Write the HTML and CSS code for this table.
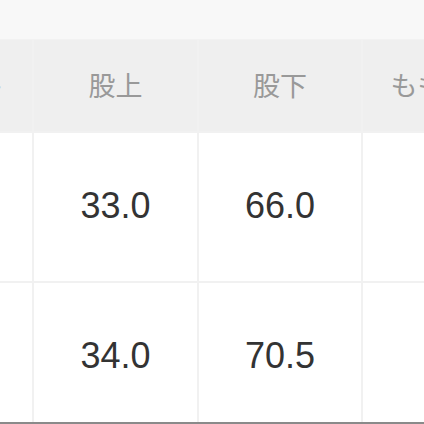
FILE: index.html
```html
<!DOCTYPE html>
<html lang="ja">
<head>
<meta charset="utf-8">
<link rel="stylesheet" href="styles.css">
</head>
<body>
<div class="frame">
  <div class="top"></div>
  <div class="table">
    <div class="cell head">ウエスト</div>
    <div class="cell head">股上</div>
    <div class="cell head">股下</div>
    <div class="cell head">もも周り</div>
    <div class="cell val"></div>
    <div class="cell val">33.0</div>
    <div class="cell val">66.0</div>
    <div class="cell val"></div>
    <div class="cell val"></div>
    <div class="cell val">34.0</div>
    <div class="cell val">70.5</div>
    <div class="cell val"></div>
  </div>
</div>
<div class="edge"></div>
</body>
</html>
```
FILE: styles.css
```css
html, body {
  margin: 0;
  padding: 0;
  background: #ffffff;
}
body {
  width: 424px;
  height: 424px;
  overflow: hidden;
}
.frame {
  height: 422px;
  overflow: hidden;
}
.top {
  height: 39px;
  background: #f8f8f8;
  border-bottom: 1px solid #f2f2f2;
}
.table {
  margin-left: -131px;
  width: 700px;
  display: grid;
  grid-template-columns: 163px 163px 162px 163px;
  grid-template-rows: 91px 148px 148px;
  column-gap: 2px;
  row-gap: 2px;
  background: #f1f1f1;
}
.cell {
  display: flex;
  align-items: center;
  justify-content: center;
  white-space: nowrap;
  overflow: visible;
}
.head {
  background: #efefef;
  color: #999999;
  font-family: "Noto Sans CJK JP", "Noto Sans", sans-serif;
  font-size: 27px;
  padding-bottom: 3px;
}
.val {
  background: #ffffff;
  color: #333333;
  font-family: "Liberation Sans", Arial, sans-serif;
  font-size: 36px;
  padding-bottom: 3px;
}
.edge {
  height: 2px;
  background: #8a8a8a;
}
```
